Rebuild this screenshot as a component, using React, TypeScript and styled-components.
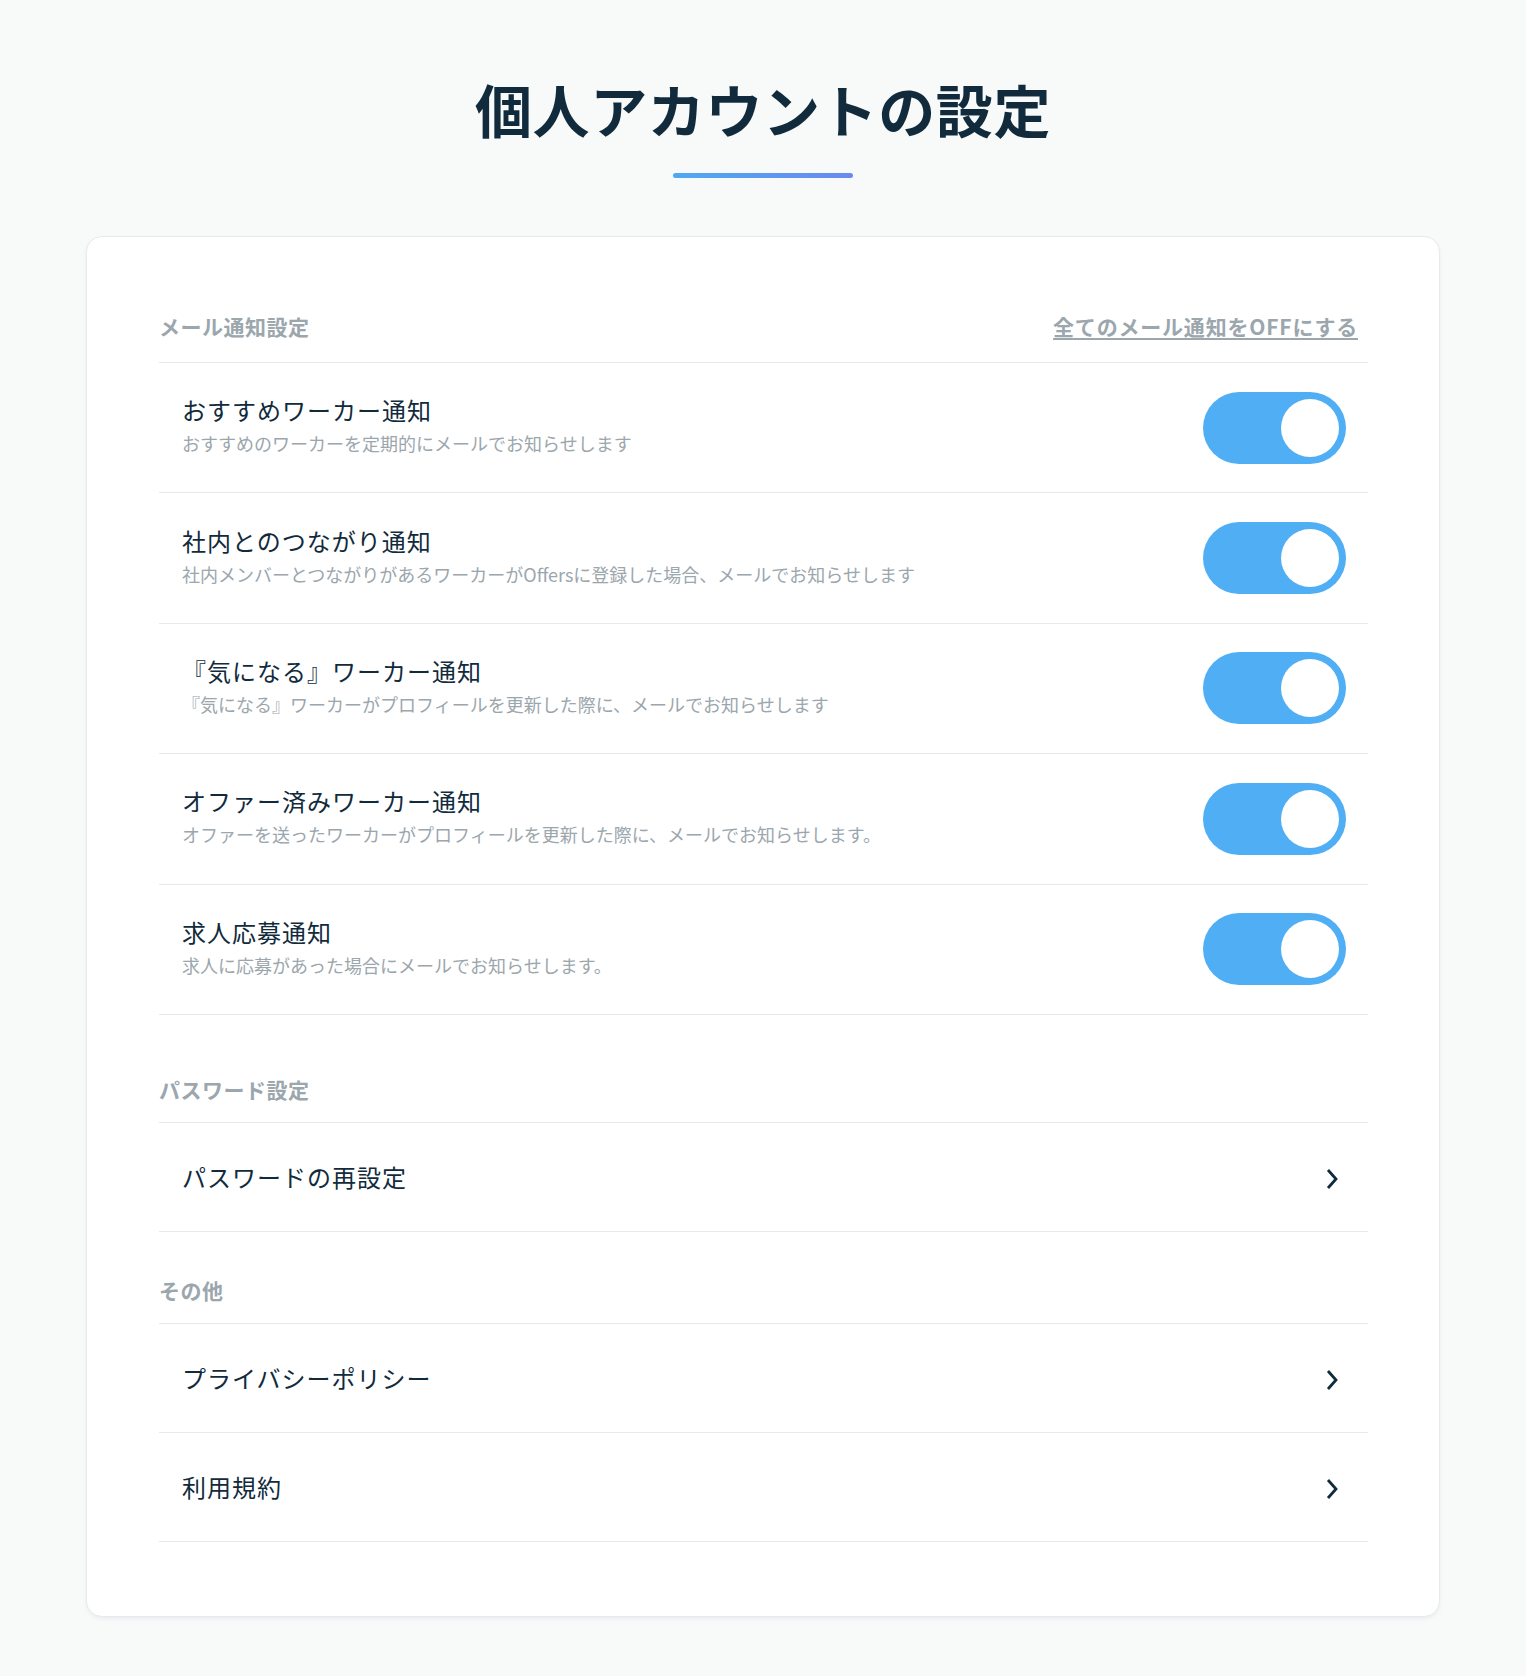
import React, { useState } from "react";
import styled, { createGlobalStyle } from "styled-components";

const GlobalStyle = createGlobalStyle`
  html, body {
    margin: 0;
    padding: 0;
    background: #f8fafa;
  }
  body {
    font-family: "Noto Sans CJK JP", "Noto Sans", sans-serif;
    color: #112b3c;
    -webkit-font-smoothing: antialiased;
  }
  *, *::before, *::after {
    box-sizing: border-box;
  }
`;

const Page = styled.main`
  display: flex;
  flex-direction: column;
  align-items: center;
  padding: 74px 0 61px;
`;

const Title = styled.h1`
  margin: 0;
  font-size: 57px;
  line-height: 68px;
  font-weight: 700;
  color: #112b3c;
  letter-spacing: 0.6px;
`;

const Accent = styled.div`
  width: 180px;
  height: 5px;
  margin-top: 31px;
  border-radius: 3px;
  background: linear-gradient(90deg, #4fa9f2, #6a89ee);
`;

const Card = styled.section`
  width: 1354px;
  margin-top: 58px;
  background: #ffffff;
  border: 1px solid #e7eaec;
  border-radius: 16px;
  box-shadow: 0 2px 4px rgba(20, 40, 60, 0.06);
  padding: 60px 71px 74px 72px;
`;

const Section = styled.div<{ $gap?: number }>`
  margin-top: ${(p) => p.$gap ?? 0}px;
`;

const SectionHeader = styled.div<{ $lift?: boolean }>`
  display: flex;
  justify-content: space-between;
  align-items: center;
  height: 66px;
  padding-bottom: ${(p) => (p.$lift ? 7 : 0)}px;
  border-bottom: 1px solid #e6e8ea;
`;

const SectionTitle = styled.h2`
  margin: 0;
  font-size: 21px;
  line-height: 30px;
  font-weight: 700;
  letter-spacing: 0.5px;
  color: #9ba6ad;
`;

const AllOffLink = styled.a`
  margin-right: 10px;
  font-size: 21px;
  line-height: 30px;
  font-weight: 700;
  letter-spacing: 0.8px;
  color: #9ba6ad;
  text-decoration: underline;
  text-decoration-thickness: 2px;
  text-underline-offset: 3px;
  cursor: pointer;
`;

const ToggleRow = styled.div`
  display: flex;
  align-items: center;
  justify-content: space-between;
  height: 130.4px;
  padding: 0 22px 0 23px;
  border-bottom: 1px solid #e6e8ea;
`;

const LinkRow = styled.a`
  display: flex;
  align-items: center;
  justify-content: space-between;
  height: 109px;
  padding: 0 24px 0 23px;
  border-bottom: 1px solid #e6e8ea;
  color: inherit;
  text-decoration: none;
  cursor: pointer;
`;

const TextBlock = styled.div`
  display: flex;
  flex-direction: column;
  padding-bottom: 6px;
`;

const ItemTitle = styled.div`
  font-size: 24px;
  line-height: 36px;
  font-weight: 400;
  letter-spacing: 1px;
  color: #112b3c;
`;

const ItemDesc = styled.div`
  margin-top: 2px;
  font-size: 18px;
  line-height: 27px;
  font-weight: 400;
  color: #9ba6ad;
`;

const Switch = styled.button<{ $on: boolean }>`
  display: flex;
  align-items: center;
  justify-content: ${(p) => (p.$on ? "flex-end" : "flex-start")};
  width: 143px;
  height: 72px;
  padding: 0 7px;
  border: none;
  border-radius: 36px;
  background: ${(p) => (p.$on ? "#50aef5" : "#d5dadd")};
  cursor: pointer;
  flex-shrink: 0;
`;

const Knob = styled.span`
  display: block;
  width: 58px;
  height: 58px;
  border-radius: 50%;
  background: #ffffff;
`;

const Chevron = styled.svg`
  width: 12px;
  height: 22px;
  margin-right: 6px;
  margin-top: 5px;
  flex-shrink: 0;
`;

const ChevronIcon = () => (
  <Chevron viewBox="0 0 12 22" fill="none">
    <polyline
      points="2,2 10,11 2,20"
      stroke="#112b3c"
      strokeWidth="2.8"
      strokeLinejoin="miter"
      strokeLinecap="butt"
    />
  </Chevron>
);

type Notice = { title: string; desc: string };

const notices: Notice[] = [
  { title: "おすすめワーカー通知", desc: "おすすめのワーカーを定期的にメールでお知らせします" },
  {
    title: "社内とのつながり通知",
    desc: "社内メンバーとつながりがあるワーカーがOffersに登録した場合、メールでお知らせします",
  },
  {
    title: "『気になる』ワーカー通知",
    desc: "『気になる』ワーカーがプロフィールを更新した際に、メールでお知らせします",
  },
  {
    title: "オファー済みワーカー通知",
    desc: "オファーを送ったワーカーがプロフィールを更新した際に、メールでお知らせします。",
  },
  { title: "求人応募通知", desc: "求人に応募があった場合にメールでお知らせします。" },
];

export default function App() {
  const [states, setStates] = useState<boolean[]>(notices.map(() => true));

  const toggle = (i: number) =>
    setStates((s) => s.map((v, idx) => (idx === i ? !v : v)));

  return (
    <>
      <GlobalStyle />
      <Page>
        <Title>個人アカウントの設定</Title>
        <Accent />
        <Card>
          <Section>
            <SectionHeader $lift>
              <SectionTitle>メール通知設定</SectionTitle>
              <AllOffLink onClick={() => setStates(notices.map(() => false))}>
                全てのメール通知をOFFにする
              </AllOffLink>
            </SectionHeader>
            {notices.map((n, i) => (
              <ToggleRow key={n.title}>
                <TextBlock>
                  <ItemTitle>{n.title}</ItemTitle>
                  <ItemDesc>{n.desc}</ItemDesc>
                </TextBlock>
                <Switch
                  role="switch"
                  aria-checked={states[i]}
                  $on={states[i]}
                  onClick={() => toggle(i)}
                >
                  <Knob />
                </Switch>
              </ToggleRow>
            ))}
          </Section>

          <Section $gap={42}>
            <SectionHeader>
              <SectionTitle>パスワード設定</SectionTitle>
            </SectionHeader>
            <LinkRow>
              <ItemTitle>パスワードの再設定</ItemTitle>
              <ChevronIcon />
            </LinkRow>
          </Section>

          <Section $gap={26}>
            <SectionHeader>
              <SectionTitle>その他</SectionTitle>
            </SectionHeader>
            <LinkRow>
              <ItemTitle>プライバシーポリシー</ItemTitle>
              <ChevronIcon />
            </LinkRow>
            <LinkRow>
              <ItemTitle>利用規約</ItemTitle>
              <ChevronIcon />
            </LinkRow>
          </Section>
        </Card>
      </Page>
    </>
  );
}
